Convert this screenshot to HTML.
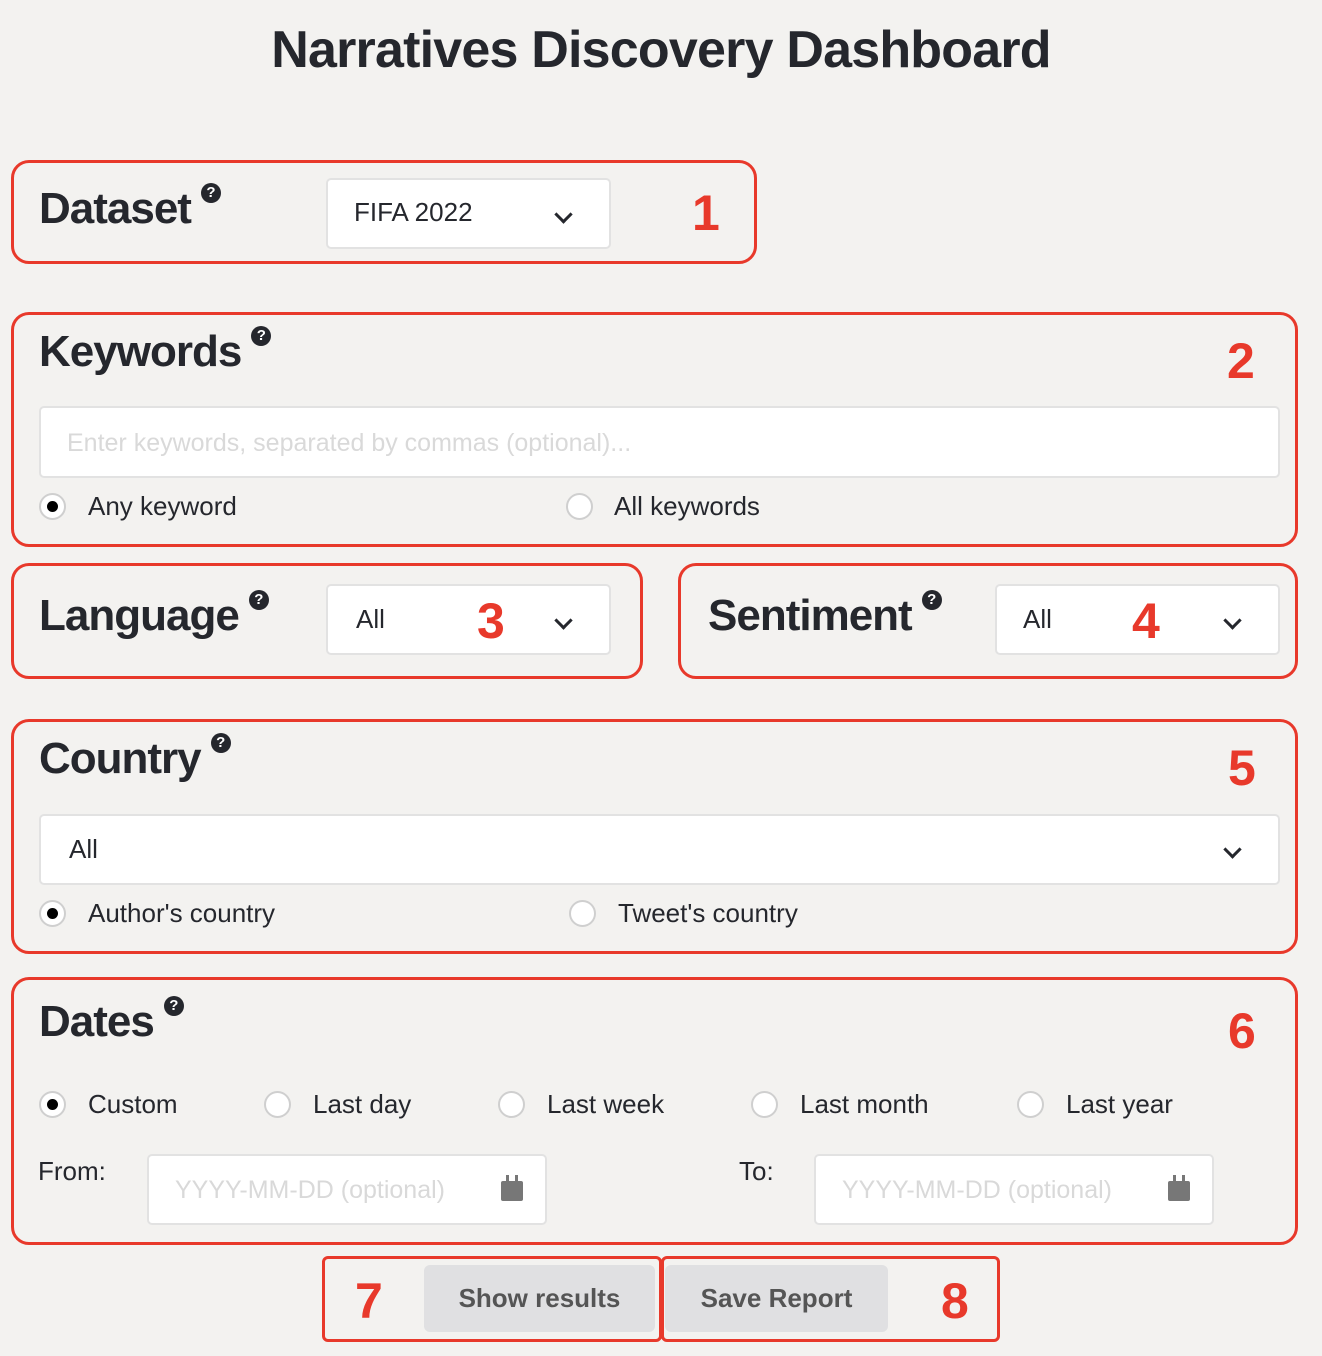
<!DOCTYPE html>
<html><head><meta charset="utf-8"><style>
*{margin:0;padding:0;box-sizing:border-box}
body{width:1322px;height:1356px;background:#f3f2f0;position:relative;font-family:"Liberation Sans",sans-serif;color:#25272d;overflow:hidden}
.a{position:absolute}
.box{position:absolute;border:3px solid #e8392b;border-radius:18px}
.h{position:absolute;font-size:44px;font-weight:bold;letter-spacing:-1px;line-height:1;color:#25272d}
.q{display:inline-block;width:20px;height:20px;border-radius:50%;background:#25272d;color:#fff;font-size:15px;font-weight:bold;text-align:center;line-height:20px;vertical-align:top;margin-left:10px;margin-top:-4px;letter-spacing:0}
.in{position:absolute;background:#fff;border:2px solid #e2e2e2;border-radius:5px}
.t{position:absolute;font-size:26px;line-height:1;color:#25272d}
.ph{position:absolute;font-size:25px;line-height:1;color:#d9d9d9}
.n{position:absolute;font-size:50px;font-weight:bold;color:#e8392b;line-height:1}
.chev{position:absolute;width:13px;height:13px;border-right:3px solid #25272d;border-bottom:3px solid #25272d;transform:rotate(45deg)}
.r{position:absolute;width:27px;height:27px;border-radius:50%;background:#fff;border:2px solid #cfcfcf}
.r.on::after{content:"";position:absolute;left:6px;top:6px;width:11px;height:11px;border-radius:50%;background:#000}
.cal{position:absolute;width:22px;height:20px;background:#777;border-radius:2px}
.cal::before,.cal::after{content:"";position:absolute;top:-6px;width:3px;height:7px;background:#777}
.cal::before{left:5px}.cal::after{right:5px}
.btn{position:absolute;background:#e0e0e2;border-radius:6px;font-size:26px;font-weight:bold;color:#555;text-align:center;line-height:67px}
</style></head><body>
<div class="a" style="left:0;width:1322px;top:20px;text-align:center;font-size:52px;font-weight:bold;line-height:60px;color:#25272d;letter-spacing:-0.8px">Narratives Discovery Dashboard</div>

<div class="box" style="left:11px;top:160px;width:746px;height:104px"></div>
<div class="h" style="left:39px;top:187px">Dataset<span class="q">?</span></div>
<div class="in" style="left:326px;top:178px;width:285px;height:71px"></div>
<div class="t" style="left:354px;top:199px">FIFA 2022</div>
<div class="chev" style="left:557px;top:208px"></div>
<div class="n" style="left:692px;top:188px">1</div>

<div class="box" style="left:11px;top:312px;width:1287px;height:235px"></div>
<div class="h" style="left:39px;top:330px">Keywords<span class="q">?</span></div>
<div class="n" style="left:1227px;top:336px">2</div>
<div class="in" style="left:39px;top:406px;width:1241px;height:72px"></div>
<div class="ph" style="left:67px;top:431px">Enter keywords, separated by commas (optional)...</div>
<div class="r on" style="left:39px;top:493px"></div>
<div class="t" style="left:88px;top:493px">Any keyword</div>
<div class="r" style="left:566px;top:493px"></div>
<div class="t" style="left:614px;top:493px">All keywords</div>

<div class="box" style="left:11px;top:563px;width:632px;height:116px"></div>
<div class="h" style="left:39px;top:594px">Language<span class="q">?</span></div>
<div class="in" style="left:326px;top:584px;width:285px;height:71px"></div>
<div class="t" style="left:356px;top:606px">All</div>
<div class="n" style="left:477px;top:596px">3</div>
<div class="chev" style="left:557px;top:614px"></div>

<div class="box" style="left:678px;top:563px;width:620px;height:116px"></div>
<div class="h" style="left:708px;top:594px">Sentiment<span class="q">?</span></div>
<div class="in" style="left:995px;top:584px;width:285px;height:71px"></div>
<div class="t" style="left:1023px;top:606px">All</div>
<div class="n" style="left:1132px;top:596px">4</div>
<div class="chev" style="left:1226px;top:614px"></div>

<div class="box" style="left:11px;top:719px;width:1287px;height:235px"></div>
<div class="h" style="left:39px;top:737px">Country<span class="q">?</span></div>
<div class="n" style="left:1228px;top:743px">5</div>
<div class="in" style="left:39px;top:814px;width:1241px;height:71px"></div>
<div class="t" style="left:69px;top:836px">All</div>
<div class="chev" style="left:1226px;top:843px"></div>
<div class="r on" style="left:39px;top:900px"></div>
<div class="t" style="left:88px;top:900px">Author's country</div>
<div class="r" style="left:569px;top:900px"></div>
<div class="t" style="left:618px;top:900px">Tweet's country</div>

<div class="box" style="left:11px;top:977px;width:1287px;height:268px"></div>
<div class="h" style="left:39px;top:1000px">Dates<span class="q">?</span></div>
<div class="n" style="left:1228px;top:1006px">6</div>
<div class="r on" style="left:39px;top:1091px"></div><div class="t" style="left:88px;top:1091px">Custom</div>
<div class="r" style="left:264px;top:1091px"></div><div class="t" style="left:313px;top:1091px">Last day</div>
<div class="r" style="left:498px;top:1091px"></div><div class="t" style="left:547px;top:1091px">Last week</div>
<div class="r" style="left:751px;top:1091px"></div><div class="t" style="left:800px;top:1091px">Last month</div>
<div class="r" style="left:1017px;top:1091px"></div><div class="t" style="left:1066px;top:1091px">Last year</div>
<div class="t" style="left:38px;top:1158px">From:</div>
<div class="in" style="left:147px;top:1154px;width:400px;height:71px"></div>
<div class="ph" style="left:175px;top:1178px">YYYY-MM-DD (optional)</div>
<div class="cal" style="left:501px;top:1181px"></div>
<div class="t" style="left:739px;top:1158px">To:</div>
<div class="in" style="left:814px;top:1154px;width:400px;height:71px"></div>
<div class="ph" style="left:842px;top:1178px">YYYY-MM-DD (optional)</div>
<div class="cal" style="left:1168px;top:1181px"></div>

<div class="btn" style="left:424px;top:1265px;width:231px;height:67px">Show results</div>
<div class="btn" style="left:665px;top:1265px;width:223px;height:67px">Save Report</div>
<div class="box" style="left:322px;top:1256px;width:340px;height:86px;border-radius:6px"></div>
<div class="box" style="left:661px;top:1256px;width:339px;height:86px;border-radius:6px"></div>
<div class="n" style="left:355px;top:1276px">7</div>
<div class="n" style="left:941px;top:1276px">8</div>
</body></html>
